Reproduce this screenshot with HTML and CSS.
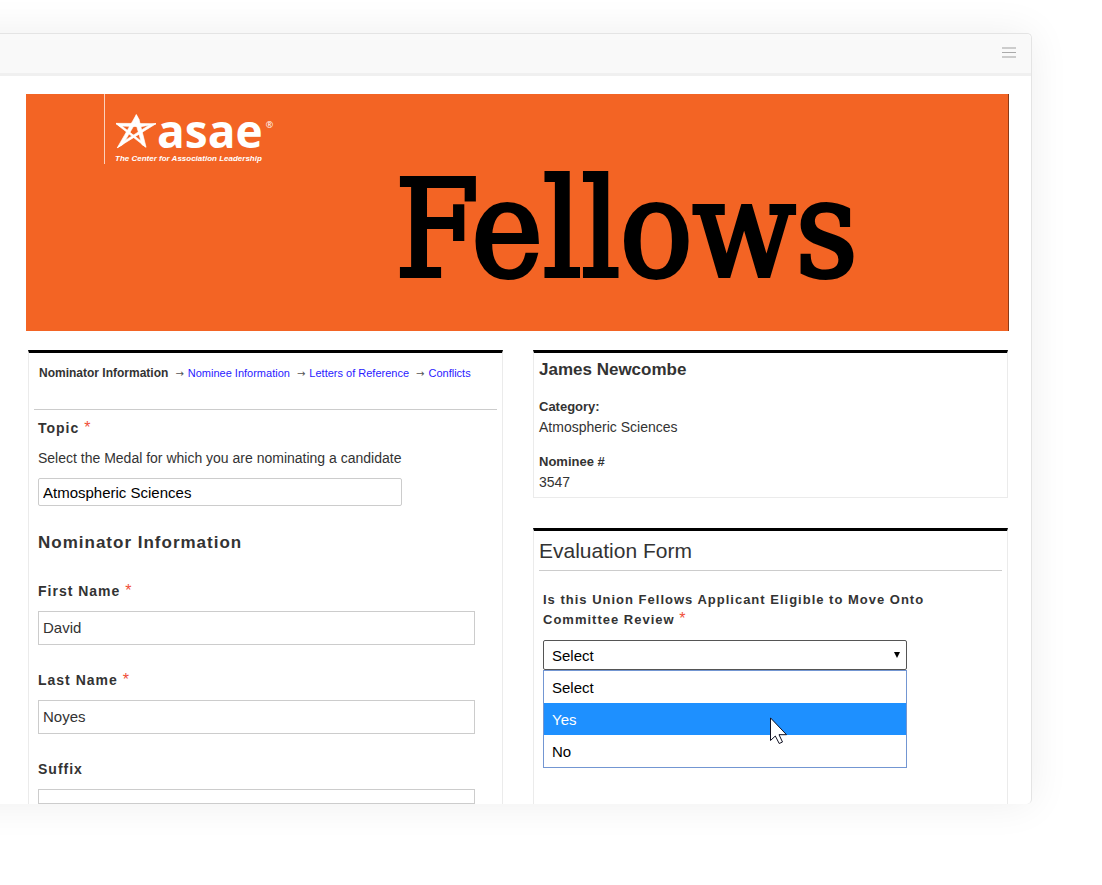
FILE: index.html
```html
<!DOCTYPE html>
<html lang="en">

<head>
    <meta charset="UTF-8">
    <meta name="viewport" content="width=device-width, initial-scale=1.0">
    <title>ASAE Fellows</title>
    <link rel="stylesheet" href="styles.css">
</head>

<body>
    <div class="window">
        <header class="toolbar">
            <button class="menu" type="button" aria-label="Menu">
                <span></span>
                <span></span>
                <span></span>
            </button>
        </header>
        <main class="page">
            <div class="banner">
                <div class="logo">
                    <div class="brand">
                        <svg class="star" viewBox="72 66 126 106" aria-hidden="true">
                            <g fill="#fff" stroke="#fff" stroke-width="2">
                                <path d="M136 70L131 84L153 160L165 167L144 84Z" />
                                <path d="M136 70L79 169L95 160L140 84Z" />
                                <path d="M75 96L195 97L150 106L86 104Z" />
                                <path d="M75 97L165 168L155 153L86 99Z" />
                                <path d="M195 97L79 169L101 148L175 101Z" />
                            </g>
                        </svg>
                        <span class="name">asae</span>
                        <span class="reg">®</span>
                    </div>
                    <p class="tagline">The Center for Association Leadership</p>
                </div>
                <h1 class="title">Fellows</h1>
            </div>
            <div class="columns">
                <form class="panel open">
                    <nav class="steps">
                        <b>Nominator Information</b>
                        <span class="arrow">→</span><a href="#nominee">Nominee Information</a>
                        <span class="arrow">→</span><a href="#letters">Letters of Reference</a>
                        <span class="arrow">→</span><a href="#conflicts">Conflicts</a>
                    </nav>
                    <div class="fields">
                        <label class="label" for="topic">Topic <i>*</i></label>
                        <p class="hint">Select the Medal for which you are nominating a candidate</p>
                        <input class="topic" id="topic" type="text" value="Atmospheric Sciences">
                        <h2>Nominator Information</h2>
                        <label class="label" for="first">First Name <i>*</i></label>
                        <input class="text" id="first" type="text" value="David">
                        <label class="label" for="last">Last Name <i>*</i></label>
                        <input class="text" id="last" type="text" value="Noyes">
                        <label class="label" for="suffix">Suffix</label>
                        <input class="text short" id="suffix" type="text">
                    </div>
                </form>
                <div class="side">
                    <section class="panel person">
                        <h3>James Newcombe</h3>
                        <dl>
                            <dt>Category:</dt>
                            <dd>Atmospheric Sciences</dd>
                            <dt>Nominee #</dt>
                            <dd>3547</dd>
                        </dl>
                    </section>
                    <form class="panel open evaluation">
                        <h2>Evaluation Form</h2>
                        <div class="question">
                            <label for="eligible">Is this Union Fellows Applicant Eligible to Move Onto Committee Review <i>*</i></label>
                            <div class="dropdown">
                                <select id="eligible">
                                    <option>Select</option>
                                    <option>Yes</option>
                                    <option>No</option>
                                </select>
                                <svg class="caret" viewBox="0 0 6 6" aria-hidden="true">
                                    <path d="M0 0h6L3 6z" />
                                </svg>
                                <ul class="options" role="listbox" aria-label="Eligible">
                                    <li role="option">Select</li>
                                    <li role="option" class="active">Yes</li>
                                    <li role="option">No</li>
                                </ul>
                                <svg class="cursor" viewBox="0 0 18 28" aria-hidden="true">
                                    <path fill="#fff" stroke="#112" d="M.5 .9V23.5L5.3 19L9.2 26.5L12.5 25L9 17.7H16.5Z" />
                                </svg>
                            </div>
                        </div>
                    </form>
                </div>
            </div>
        </main>
    </div>
</body>

</html>
```
FILE: styles.css
```css
* {
    box-sizing: border-box;
}

body {
    margin: 0;
    padding: 33px 70px 80px 0;
    background-color: #fff;
    color: #333;
    font-family: "Liberation Sans", Arial, sans-serif;
    font-size: 14px;
    line-height: 20px;
    overflow-x: hidden;
}

h1,
h2,
h3,
p,
ul,
dl,
dd {
    margin: 0;
    padding: 0;
}

i {
    color: #f04e37;
    font-size: 16px;
    font-style: normal;
    font-weight: normal;
    line-height: 16px;
}

/* the left side of the window runs off the screen */
.window {
    margin-left: -60px;
    border: 1px solid #e4e4e4;
    border-bottom: 0;
    border-radius: 5px;
    background-color: #fff;
    box-shadow: 0 0 40px rgba(0, 0, 0, 0.07);
}

.toolbar {
    display: flex;
    justify-content: flex-end;
    align-items: center;
    height: 42px;
    padding: 0 15px 2px 0;
    border-bottom: 3px solid #f0f0f0;
    border-radius: 5px 5px 0 0;
    background-color: #f9f9f9;
}

.menu {
    display: flex;
    flex-direction: column;
    gap: 3px;
    width: 14px;
    padding: 0;
    border: 0;
    background: none;
}

.menu span {
    height: 2px;
    background-color: #ccc;
}

.menu span:nth-child(2) {
    height: 1px;
    background-color: #aaa;
}

.page {
    padding: 18px 22px 0 85px;
}

/* banner */
.banner {
    padding-bottom: 34px;
    border-right: 1px solid #8a3a16;
    background-color: #f36424;
}

.logo {
    height: 70px;
    margin-left: 78px;
    padding: 19px 0 0 10px;
    border-left: 1px solid #fbd0bb;
    color: #fff;
}

.brand {
    display: flex;
    height: 36px;
}

.star {
    width: 42px;
    height: 36px;
}

.name {
    font: bold 46px/34px "Open Sans", sans-serif;
}

.reg {
    margin-left: 3px;
    font: 9px/24px "Open Sans", sans-serif;
}

.tagline {
    font: italic bold 8px/20px "Liberation Sans", Arial, sans-serif;
}

.title {
    margin-left: 37%;
    padding-left: 6px;
    color: #000;
    font: 134px/132px "DejaVu Serif Condensed", "DejaVu Serif", serif;
    height: 133px;
    -webkit-text-stroke: 4px #000;
}

/* columns */
.columns {
    display: grid;
    grid-template-columns: 1fr 1fr;
    gap: 30px;
    padding: 19px 1px 0 2px;
}

.side {
    display: flex;
    flex-direction: column;
    gap: 30px;
}

.panel {
    padding: 0 5px;
    border: 1px solid #ebebeb;
    border-top: 3px solid #000;
}

.open {
    border-bottom: 0;
}

.steps {
    height: 57px;
    padding: 10px 0 0 5px;
    border-bottom: 1px solid #ccc;
    font-size: 11px;
    white-space: nowrap;
}

.steps b {
    font-size: 12px;
}

.steps a {
    color: #2a1aff;
    text-decoration: none;
}

.arrow {
    margin: 0 4px;
    color: #555;
    font-family: "DejaVu Sans", sans-serif;
    font-size: 10px;
}

.fields {
    padding: 8px 22px 0 4px;
}

.label {
    display: block;
    height: 20px;
    font-weight: bold;
    letter-spacing: 1px;
}

.hint {
    margin: 10px 0;
}

input {
    display: block;
    padding: 0 4px;
    border: 1px solid #ccc;
    background-color: #fff;
    color: #333;
    font-family: inherit;
    font-size: 15px;
}

.topic {
    width: 364px;
    height: 28px;
    border-radius: 2px;
    color: #000;
}

.fields h2 {
    margin: 27px 0 28px;
    font-size: 17px;
    line-height: 20px;
    letter-spacing: 1px;
}

.text {
    width: 100%;
    height: 34px;
    margin: 10px 0 25px;
    padding-bottom: 2px;
}

.short {
    height: 15px;
    margin-bottom: 0;
}

/* nominee */
.person {
    padding-bottom: 5px;
}

.person h3 {
    padding-top: 7px;
    font-size: 17px;
    line-height: 20px;
}

.person dt {
    padding-top: 15px;
    font-size: 13px;
    font-weight: bold;
}

.person dt:first-child {
    padding-top: 17px;
}

/* evaluation */
.evaluation {
    flex: 1;
}

.evaluation h2 {
    height: 40px;
    border-bottom: 1px solid #ccc;
    font-size: 21px;
    font-weight: normal;
    line-height: 40px;
}

.question {
    padding: 19px 60px 0 4px;
}

.question label {
    display: block;
    height: 40px;
    font-size: 13px;
    font-weight: bold;
    letter-spacing: 1px;
}

.dropdown {
    position: relative;
    width: 364px;
    margin-top: 10px;
}

select {
    display: block;
    appearance: none;
    width: 100%;
    height: 30px;
    padding: 0 8px;
    border: 1px solid #555;
    border-radius: 2px;
    background-color: #fff;
    color: #000;
    font-family: inherit;
    font-size: 15px;
}

.caret {
    position: absolute;
    top: 12px;
    right: 7px;
    width: 6px;
    height: 6px;
}

.options {
    position: absolute;
    top: 30px;
    left: 0;
    width: 100%;
    border: 1px solid #7396d2;
    background-color: #fff;
    color: #000;
    font-size: 15px;
    line-height: 30px;
    list-style: none;
}

.options li {
    padding: 2px 0 0 8px;
}

.options .active {
    background-color: #1e90ff;
    color: #fff;
}

.cursor {
    position: absolute;
    top: 77px;
    left: 227px;
    width: 18px;
    height: 28px;
}
```
